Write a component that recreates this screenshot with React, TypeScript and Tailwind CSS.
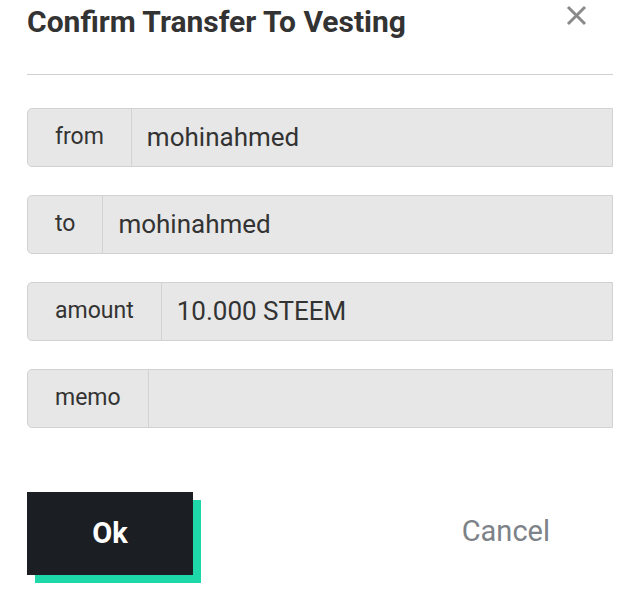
import React from "react";

function Row({ label, value }: { label: string; value: string }) {
  return (
    <div className="flex h-[59px] w-full rounded-l-[5px] border border-[#d2d2d2] bg-[#e7e7e7]">
      <div className="flex items-center border-r border-[#d2d2d2] px-[27px] text-[23px] text-[#333]">
        {label}
      </div>
      <div className="flex flex-1 items-center pl-[15px] text-[26px] text-[#333]">{value}</div>
    </div>
  );
}

export default function App() {
  return (
    <div
      className="relative h-[590px] w-[640px] bg-white"
      style={{ fontFamily: "Roboto, 'Liberation Sans', sans-serif" }}
    >
      <div className="pl-[27px] pr-[27px] pt-[4px]">
        <h1 className="text-[30px] font-bold leading-[36px] text-[#333]">Confirm Transfer To Vesting</h1>
        <div className="mt-[34px] h-px w-full bg-[#cfcfcf]" />
        <div className="mt-[33px] flex flex-col gap-[28px]">
          <Row label="from" value="mohinahmed" />
          <Row label="to" value="mohinahmed" />
          <Row label="amount" value="10.000 STEEM" />
          <Row label="memo" value="" />
        </div>
        <div className="mt-[64px] flex items-start">
          <div className="relative h-[83px] w-[166px]">
            <div className="absolute left-[8px] top-[8px] h-[83px] w-[166px] bg-[#1fd8a9]" />
            <button className="relative flex h-[83px] w-[166px] items-center justify-center bg-[#1b1e22] text-[29px] font-bold text-white">
              Ok
            </button>
          </div>
          <div className="flex h-[80px] flex-1 items-center justify-end pr-[63px] text-[29px] text-[#7c8288]">
            Cancel
          </div>
        </div>
      </div>
      <button className="absolute left-[563px] top-[2px] flex h-[27px] w-[27px] items-center justify-center">
        <svg width="21" height="21" viewBox="0 0 21 21">
          <path d="M2 2 L19 19 M19 2 L2 19" stroke="#8a8a8a" strokeWidth="3" />
        </svg>
      </button>
    </div>
  );
}
